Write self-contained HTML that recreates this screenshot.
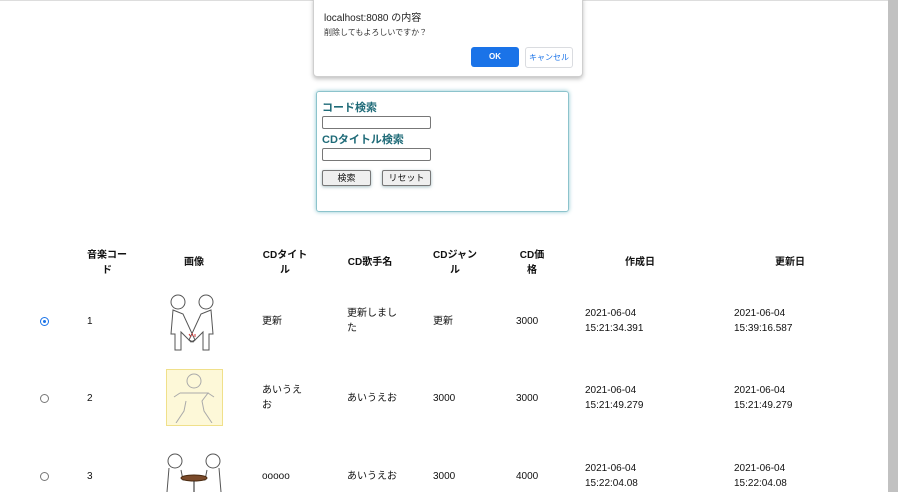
<!DOCTYPE html>
<html><head><meta charset="utf-8"><style>
body{margin:0;width:898px;height:492px;overflow:hidden;background:#fff;font-family:"Liberation Sans","Noto Sans CJK JP",sans-serif;position:relative;font-size:11px;color:#111}
.a{position:absolute}
.sb{position:absolute;right:0;top:0;width:10px;height:492px;background:#c1c1c1}
.dlg{left:313px;top:-2px;width:268px;height:77px;border:1px solid #cfcfcf;border-radius:0 0 4px 4px;box-shadow:0 2px 4px rgba(0,0,0,.25);background:#fff}
.box{left:316px;top:91px;width:251px;height:119px;border:1px solid #8cc3cc;border-radius:3px;box-shadow:0 0 4px #8ec6d0}
.lab{color:#1f6b78;font-weight:bold;font-size:11px}
.inp{width:107px;height:11px;border:1px solid #777;border-radius:2px;background:#fff}
.btn{height:14px;border:1px solid #777;background:#efefef;border-radius:2px;font-size:9px;text-align:center;line-height:14px;box-shadow:0 1px 3px rgba(80,130,140,.5)}
.h{font-weight:bold;font-size:10px;text-align:center;line-height:15px}
.c{font-size:10px;line-height:15px}
.r{width:7px;height:7px;border:1px solid #777;border-radius:50%}
</style></head><body>
<div class="a" style="left:0;top:0;width:888px;height:1px;background:#ddd"></div>
<div class="sb"></div>
<div class="a dlg">
<div class="a" style="left:10px;top:10px;font-size:10px;color:#222">localhost:8080 の内容</div>
<div class="a" style="left:10px;top:28px;font-size:8px;color:#333">削除してもよろしいですか？</div>
<div class="a" style="left:157px;top:48px;width:48px;height:20px;background:#1a73e8;border-radius:3px;color:#fff;font-size:8px;font-weight:bold;text-align:center;line-height:20px">OK</div>
<div class="a" style="left:211px;top:48px;width:46px;height:19px;border:1px solid #dadce0;border-radius:3px;color:#1a73e8;font-size:8px;text-align:center;line-height:19px">キャンセル</div>
</div>
<div class="a box">
<div class="a lab" style="left:5px;top:7px">コード検索</div>
<div class="a inp" style="left:5px;top:24px"></div>
<div class="a lab" style="left:5px;top:39px">CDタイトル検索</div>
<div class="a inp" style="left:5px;top:56px"></div>
<div class="a btn" style="left:5px;top:78px;width:47px">検索</div>
<div class="a btn" style="left:65px;top:78px;width:47px">リセット</div>
</div>

<div class="a h" style="left:82px;top:248px;width:50px">音楽コー<br>ド</div>
<div class="a h" style="left:174px;top:255px;width:40px">画像</div>
<div class="a h" style="left:260px;top:248px;width:50px">CDタイト<br>ル</div>
<div class="a h" style="left:340px;top:255px;width:60px">CD歌手名</div>
<div class="a h" style="left:430px;top:248px;width:50px">CDジャン<br>ル</div>
<div class="a h" style="left:512px;top:248px;width:40px">CD価<br>格</div>
<div class="a h" style="left:610px;top:255px;width:60px">作成日</div>
<div class="a h" style="left:760px;top:255px;width:60px">更新日</div>

<div class="a" style="left:40px;top:317px;width:7px;height:7px;border:1px solid #1a73e8;border-radius:50%"><div style="margin:2px;width:3px;height:3px;border-radius:50%;background:#1a73e8"></div></div>
<div class="a r" style="left:40px;top:394px"></div>
<div class="a r" style="left:40px;top:472px"></div>

<div class="a c" style="left:87px;top:314px">1</div>
<div class="a c" style="left:87px;top:391px">2</div>
<div class="a c" style="left:87px;top:469px">3</div>

<svg class="a" style="left:165px;top:290px" width="56" height="62" fill="none" stroke="#555" stroke-width="1">
<circle cx="13" cy="12" r="7"/><circle cx="41" cy="12" r="7"/>
<path d="M8 20 L6 44 L10 44 L10 60 L16 60 L16 42 L26 52 L30 50 L18 24 Z"/>
<path d="M46 20 L48 44 L44 44 L44 60 L38 60 L38 42 L28 52 L24 50 L36 24 Z"/>
<path d="M24 44 l2 3 M27 43 l1 3 M30 44 l0 3" stroke="#c33"/>
</svg>
<div class="a" style="left:166px;top:369px;width:55px;height:55px;border:1px solid #f0e08a;background:#fdf8d8"></div>
<svg class="a" style="left:168px;top:371px" width="52" height="52" fill="none" stroke="#aaa" stroke-width="1">
<circle cx="26" cy="10" r="7"/><path d="M12 22 L40 22 L34 30 L36 40 L44 52 M18 30 L16 40 L8 52 M12 22 L6 26 M40 22 L46 26"/></svg>
<svg class="a" style="left:163px;top:450px" width="60" height="42" fill="none" stroke="#555" stroke-width="1">
<circle cx="12" cy="11" r="7"/><circle cx="50" cy="11" r="7"/>
<path d="M6 18 L4 42 M18 20 L20 30 L28 30 M56 18 L58 42 M44 20 L42 30 L34 30"/>
<ellipse cx="31" cy="28" rx="13" ry="3" fill="#7a4a2a" stroke="#4a2a10"/><path d="M31 31 L31 42" stroke="#222"/>
</svg>

<div class="a c" style="left:262px;top:314px">更新</div>
<div class="a c" style="left:262px;top:383px">あいうえ<br>お</div>
<div class="a c" style="left:262px;top:469px">ooooo</div>

<div class="a c" style="left:347px;top:306px">更新しまし<br>た</div>
<div class="a c" style="left:347px;top:391px">あいうえお</div>
<div class="a c" style="left:347px;top:469px">あいうえお</div>

<div class="a c" style="left:433px;top:314px">更新</div>
<div class="a c" style="left:433px;top:391px">3000</div>
<div class="a c" style="left:433px;top:469px">3000</div>

<div class="a c" style="left:516px;top:314px">3000</div>
<div class="a c" style="left:516px;top:391px">3000</div>
<div class="a c" style="left:516px;top:469px">4000</div>

<div class="a c" style="left:585px;top:306px">2021-06-04<br>15:21:34.391</div>
<div class="a c" style="left:585px;top:383px">2021-06-04<br>15:21:49.279</div>
<div class="a c" style="left:585px;top:461px">2021-06-04<br>15:22:04.08</div>

<div class="a c" style="left:734px;top:306px">2021-06-04<br>15:39:16.587</div>
<div class="a c" style="left:734px;top:383px">2021-06-04<br>15:21:49.279</div>
<div class="a c" style="left:734px;top:461px">2021-06-04<br>15:22:04.08</div>
</body></html>
